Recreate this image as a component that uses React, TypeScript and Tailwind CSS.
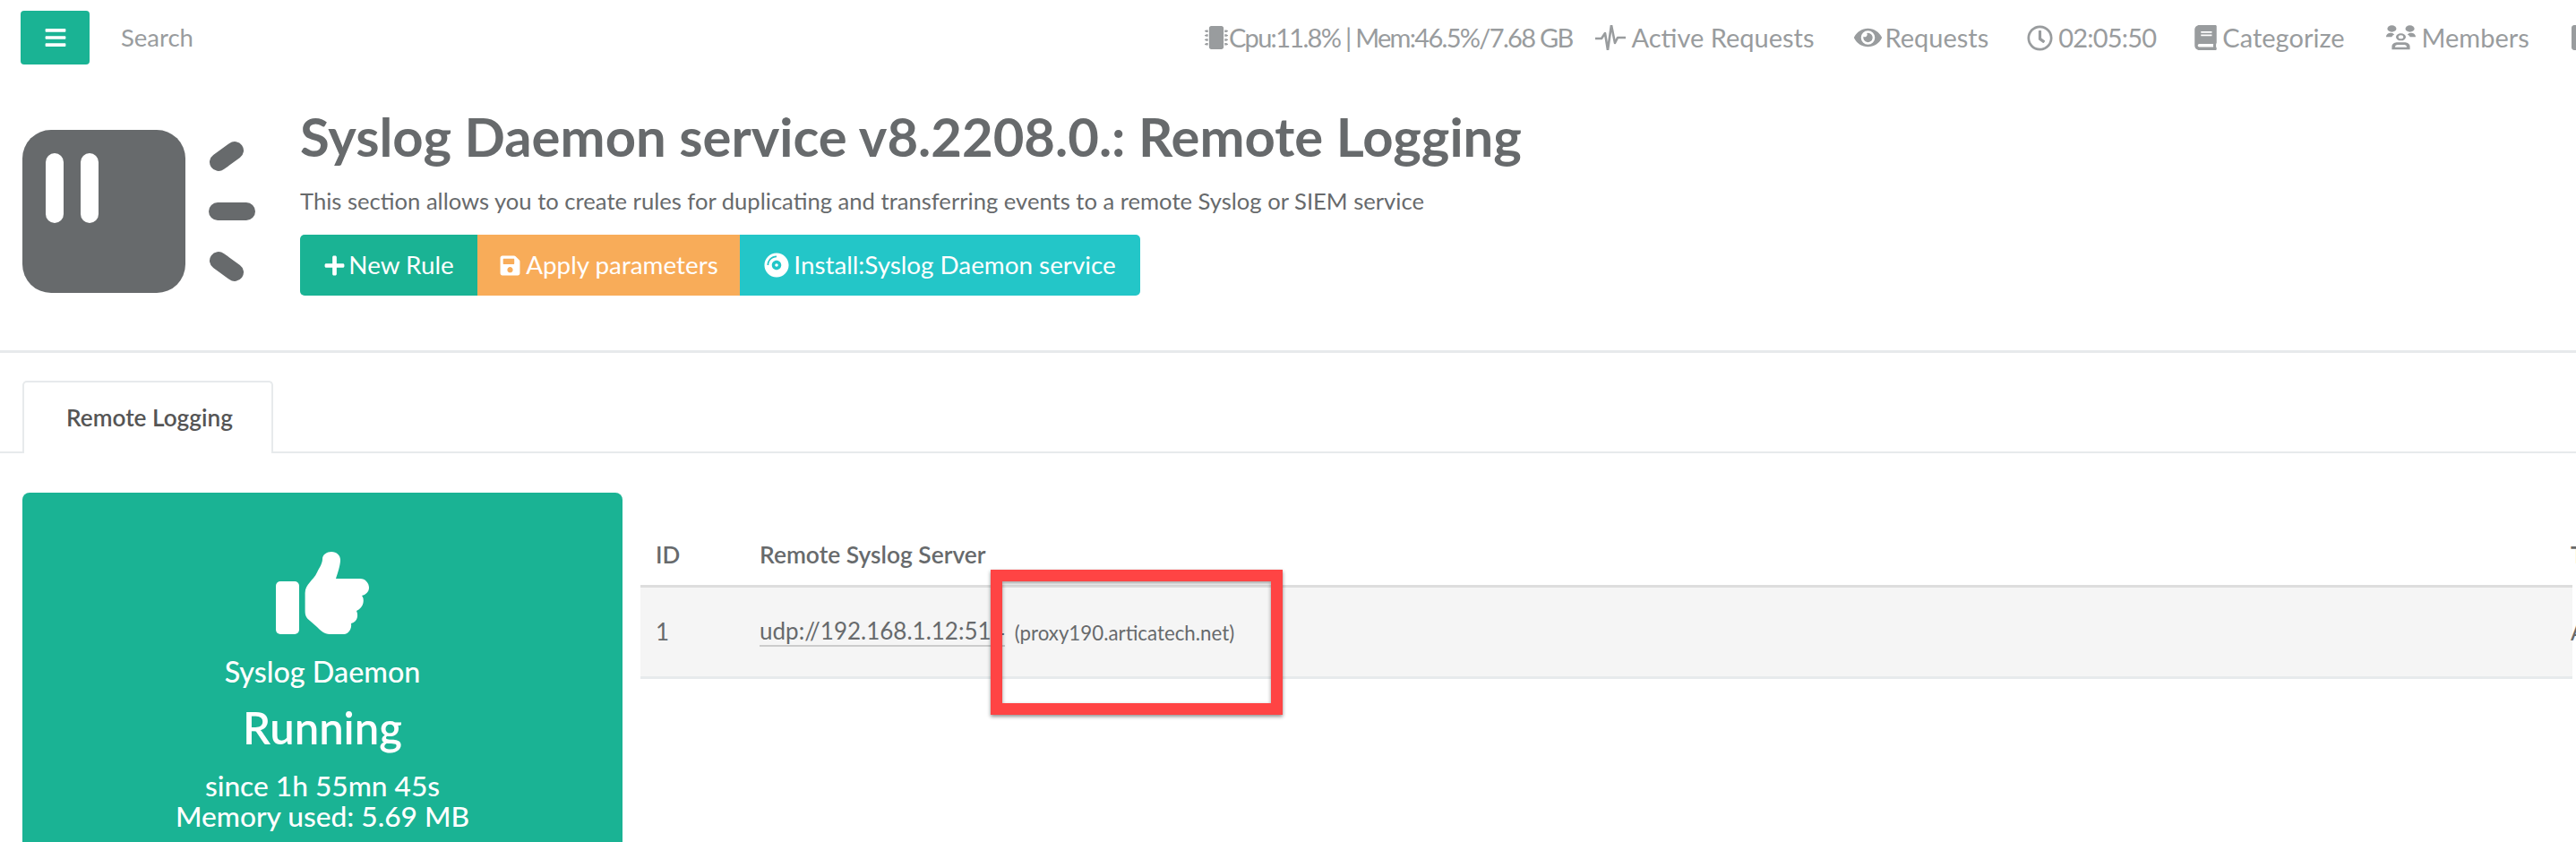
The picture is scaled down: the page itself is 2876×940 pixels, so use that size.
import { FaBars, FaBook, FaCompactDisc, FaEye, FaMicrochip, FaPenSquare, FaPlus, FaRegClock, FaSave } from "react-icons/fa";

function UsersIcon() {
    return (
        <svg viewBox="0 0 36 42" className="w-[33px] h-[28px] fill-[#999c9e]" preserveAspectRatio="none">
            <circle cx="7" cy="6" r="5.5" />
            <circle cx="29" cy="6" r="5.5" />
            <path d="M0 20c0-5 3-7 6-7 2 0 3 1 4 3-2 1-3 3-3 4z" />
            <path d="M36 20c0-5-3-7-6-7-2 0-3 1-4 3 2 1 3 3 3 4z" />
            <circle cx="18" cy="20" r="4.5" fill="none" stroke="#999c9e" strokeWidth="3" />
            <path d="M7 41v-5c0-5 4-7 7-7h8c3 0 7 2 7 7v5zM11 37h14v-1c0-2-2-3-4-3h-6c-2 0-4 1-4 3z" fillRule="evenodd" />
        </svg>
    );
}

function PulseIcon() {
    return (
        <svg viewBox="0 0 34 28" className="w-[34px] h-[28px]" fill="none" stroke="#999c9e" strokeWidth="2.6" strokeLinejoin="round">
            <path d="M0 15h7l4 -6l3 19l4-28l4 20l3-6h9" />
        </svg>
    );
}

function ThumbIcon() {
    return (
        <svg viewBox="0 0 104 92" className="w-[104px] h-[92px] fill-white">
            <rect x="0" y="33" width="26" height="59" rx="5" />
            <path d="M52 8C52 3 57 0 62 0C68 0 72 4 72 9C72 15 69 24 67 30H94C100 30 104 35 104 40C104 45 100 48 96 49C99 52 99 62 90 66C92 70 92 78 84 80C85 86 81 92 76 92H60C54 92 50 88 46 84L38 77C34 74 32.6 71 32.6 66V46C32.6 36 42 32 46 23C49 17 52 13 52 8Z" />
        </svg>
    );
}

function ProductLogo() {
    return (
        <svg viewBox="0 0 260 182" className="w-[260px] h-[182px] shrink-0">
            <rect x="0" y="0" width="182" height="182" rx="32" fill="#676a6c" />
            <rect x="26" y="26" width="20" height="78" rx="10" fill="#ffffff" />
            <rect x="65" y="26" width="20" height="78" rx="10" fill="#ffffff" />
            <g stroke="#676a6c" strokeWidth="20" strokeLinecap="round">
                <path d="M219 36L237 23" />
                <path d="M218 91H250" />
                <path d="M219 146L237 159" />
            </g>
        </svg>
    );
}

function App() {
    return (
        <div className="w-[2876px] h-[940px] overflow-hidden bg-white text-[#676a6c] font-['Lato','Open_Sans',sans-serif]">
            {/* top bar */}
            <div className="flex items-center h-[84px] pl-[23px] text-[29px] text-[#999c9e]">
                <button className="w-[77px] h-[60px] rounded-[4px] bg-[#1ab394] flex items-center justify-center text-white shrink-0">
                    <FaBars className="w-[26px] h-[26px]" />
                </button>
                <div className="w-[1245px] pl-[35px] shrink-0 text-[27.5px]">Search</div>
                <div className="flex items-center gap-[46px] shrink-0 whitespace-nowrap">
                    <span className="flex items-center gap-[1px] -mr-[21px] tracking-[-1.7px]"><FaMicrochip className="w-[26px] h-[28px]" />Cpu:11.8% | Mem:46.5%/7.68 GB</span>
                    <span className="flex items-center gap-[7px] -mr-[2px]"><PulseIcon />Active Requests</span>
                    <span className="flex items-center gap-[4px] -mr-[3px]"><FaEye className="w-[31px] h-[28px]" />Requests</span>
                    <span className="flex items-center gap-[6px] tracking-[-0.8px] -mr-[3px]"><FaRegClock className="w-[29px] h-[29px]" />02:05:50</span>
                    <span className="flex items-center gap-[6px]"><FaBook className="w-[25px] h-[28px]" />Categorize</span>
                    <span className="flex items-center gap-[7px]"><UsersIcon />Members</span>
                    <FaPenSquare className="w-[30px] h-[32px]" />
                </div>
            </div>

            {/* page heading */}
            <div className="flex items-start pl-[25px] pt-[61px] pr-[30px] h-[310px] border-b-[3px] border-[#e7eaec]">
                <ProductLogo />
                <div className="ml-[50px] -mt-[31px]">
                    <h1 className="text-[59.8px] leading-[76px] font-bold whitespace-nowrap">Syslog Daemon service v8.2208.0.: Remote Logging</h1>
                    <p className="text-[25.6px] leading-[36px] mt-[16px] whitespace-nowrap">This section allows you to create rules for duplicating and transferring events to a remote Syslog or SIEM service</p>
                    <div className="flex mt-[20px] h-[68px] text-[27.8px] text-white w-fit rounded-[5px] overflow-hidden">
                        <button className="w-[198px] bg-[#1ab394] flex items-center justify-center gap-[3px]"><FaPlus className="w-[25px] h-[25px]" />New Rule</button>
                        <button className="w-[293px] bg-[#f8ac59] flex items-center justify-center gap-[5px]"><FaSave className="w-[25px] h-[25px]" />Apply parameters</button>
                        <button className="w-[447px] bg-[#23c6c8] flex items-center justify-center gap-[5px]"><FaCompactDisc className="w-[28px] h-[28px]" />Install:Syslog Daemon service</button>
                    </div>
                </div>
            </div>

            {/* tabs */}
            <div className="flex pl-[25px] pt-[31px] border-b-[2px] border-[#e7eaec] h-[112px]">
                <div className="w-[280px] h-[81px] pl-[4px] bg-white border-[2px] border-b-0 border-[#e7eaec] rounded-t-[5px] flex items-center justify-center text-[26.2px] font-semibold text-[#555555]">
                    Remote Logging
                </div>
            </div>

            {/* content */}
            <div className="relative flex items-start pl-[25px] pt-[44px]">
                <div className="w-[670px] h-[400px] shrink-0 rounded-[8px] bg-[#1ab394] text-white flex flex-col items-center pt-[66px]">
                    <ThumbIcon />
                    <div className="text-[32.3px] leading-[40px] font-medium mt-[22px]">Syslog Daemon</div>
                    <div className="text-[49px] leading-[60px] font-semibold mt-[12px]">Running</div>
                    <div className="text-[31.7px] leading-[34px] font-medium mt-[18px]">since 1h 55mn 45s</div>
                    <div className="text-[31.7px] leading-[34px] font-medium">Memory used: 5.69 MB</div>
                </div>

                <div className="ml-[20px] w-[2157px] shrink-0 text-[26px] whitespace-nowrap">
                    <div className="flex items-center h-[106px] pt-[36px] border-b-[3px] border-[#dddddd] font-semibold">
                        <div className="w-[133px] pl-[17px]">ID</div>
                        <div className="flex-1 text-[26.4px]">Remote Syslog Server</div>
                        <div className="w-[2px]">T</div>
                    </div>
                    <div className="flex items-center h-[102px] bg-[#f5f5f5] border-b-[3px] border-[#e7eaec]">
                        <div className="w-[133px] pl-[17px]">1</div>
                        <div className="flex-1 flex items-center">
                            <span className="border-b-[2px] border-[#cccccc] leading-[31px]">udp://192.168.1.12:514</span>
                            <span className="ml-[11px] text-[22.3px] pt-[2px]">(proxy190.articatech.net)</span>
                        </div>
                        <div className="w-[2px]">A</div>
                    </div>
                </div>

                {/* red highlight drawn over the row */}
                <div className="absolute left-[1106px] top-[130px] w-[326px] h-[162px] border-[13px] border-[#ff4444] shadow-[0_2px_4px_rgba(0,0,0,0.45),inset_0_2px_4px_rgba(0,0,0,0.4)]" />
            </div>
        </div>
    );
}

export default App;
